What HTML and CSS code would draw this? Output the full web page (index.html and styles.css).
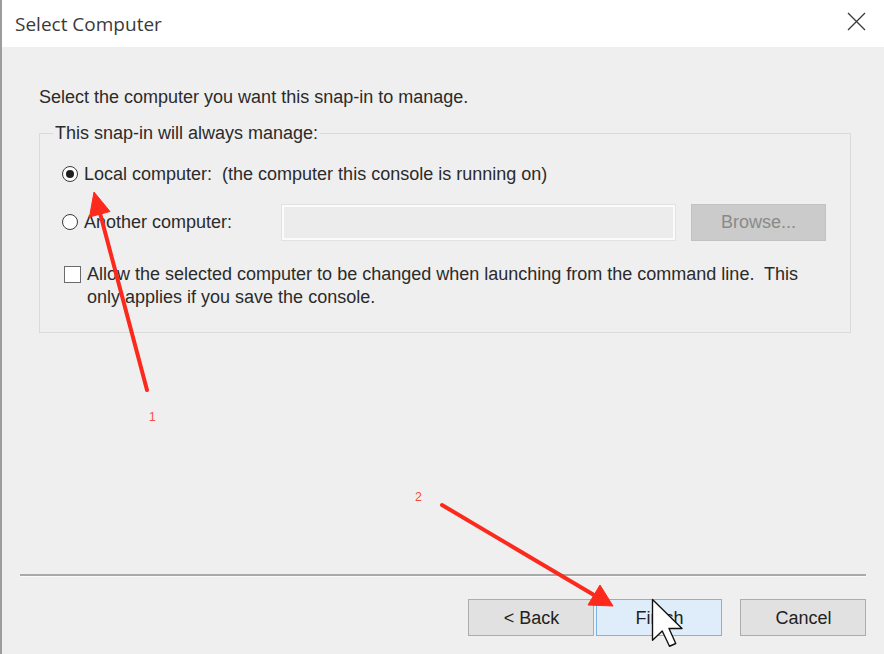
FILE: index.html
```html
<!DOCTYPE html>
<html>
<head>
<meta charset="utf-8">
<title>Select Computer</title>
<link rel="stylesheet" href="styles.css">
</head>
<body>
<div class="window">
  <div class="titlebar">
    <span class="title">Select Computer</span>
    <svg class="close" width="19" height="19" viewBox="0 0 19 19"><path d="M1 1 L18 18 M18 1 L1 18" stroke="#3a3a3a" stroke-width="1.3" fill="none"/></svg>
  </div>
  <div class="content">
    <p class="prompt">Select the computer you want this snap-in to manage.</p>
    <fieldset class="group">
      <legend>This snap-in will always manage:</legend>
      <div class="row row-local">
        <span class="radio checked"></span>
        <span class="label">Local computer:&nbsp; (the computer this console is running on)</span>
      </div>
      <div class="row row-other">
        <span class="radio"></span>
        <span class="label label-fixed">Another computer:</span>
        <span class="textbox"></span>
        <span class="btn-browse">Browse...</span>
      </div>
      <div class="row row-check">
        <span class="checkbox"></span>
        <span class="check-text">Allow the selected computer to be changed when launching from the command line.&nbsp; This<br>only applies if you save the console.</span>
      </div>
    </fieldset>
  </div>
  <div class="footer">
    <div class="separator"></div>
    <div class="buttons">
      <button class="btn">&lt; Back</button>
      <button class="btn btn-default">Finish</button>
      <button class="btn btn-cancel">Cancel</button>
    </div>
  </div>
  <svg class="annotations" width="884" height="654" viewBox="0 0 884 654">
    <g fill="#fc2a1c" stroke="#fc2a1c">
      <line x1="147" y1="390" x2="99.7" y2="212" stroke-width="4" stroke-linecap="round"/>
      <polygon points="94,192 110,211.5 89.5,217" stroke-width="1" stroke-linejoin="round"/>
      <line x1="442" y1="505" x2="594" y2="595" stroke-width="4" stroke-linecap="round"/>
      <polygon points="613,606 588,605 600,585" stroke-width="1" stroke-linejoin="round"/>
    </g>
    <text class="anno-label" x="149" y="421" font-size="12">1</text>
    <text class="anno-label" x="415" y="501" font-size="12.5">2</text>
    <path d="M0 0 V16.3 L3.9 12.6 L6.8 18.7 L9.3 17.6 L6.6 11.6 H11.8 Z" transform="translate(652.5 599.5) scale(2.5)" fill="#fff" stroke="#111" stroke-width="0.55" stroke-linejoin="round"/>
  </svg>
</div>
</body>
</html>
```

FILE: styles.css
```css
* {
  box-sizing: border-box;
}

html,
body {
  margin: 0;
  padding: 0;
}

body {
  width: 884px;
  height: 654px;
  overflow: hidden;
  background: #efefef;
  font-family: "Liberation Sans", Arial, sans-serif;
  color: #2b2b2b;
}

.window {
  position: relative;
  width: 884px;
  height: 654px;
  display: flex;
  flex-direction: column;
  background: #efefef;
  border-left: 2px solid #9c9c9c;
}

.titlebar {
  flex: none;
  height: 47px;
  background: #ffffff;
  display: flex;
  justify-content: space-between;
  align-items: center;
  padding: 0 18px 0 13px;
}

.title {
  font-family: "Open Sans", "Noto Sans", sans-serif;
  font-size: 19px;
  color: #3a3a3a;
}

.close {
  align-self: flex-start;
  margin-top: 12px;
}

.content {
  flex: 1;
  padding: 0 33px 0 37px;
  font-size: 18px;
}

.prompt {
  margin: 39px 0 0;
  line-height: 22px;
}

.group {
  margin: 14px 0 0;
  padding: 0 24px 23px 22px;
  border: 1px solid #dadada;
  min-width: 0;
}

.group legend {
  padding: 0 2px;
  margin-left: -9px;
  line-height: 22px;
}

.row {
  display: flex;
  align-items: center;
}

.row-local {
  height: 30px;
  margin-top: 15px;
}

.row-other {
  height: 38px;
  margin-top: 14px;
}

.row-check {
  margin-top: 22px;
  align-items: flex-start;
  line-height: 23px;
}

.radio {
  flex: none;
  width: 16px;
  height: 16px;
  border: 1px solid #3a3a3a;
  border-radius: 50%;
  background: #ffffff;
  margin-right: 6px;
  display: flex;
  align-items: center;
  justify-content: center;
}

.radio.checked::after {
  content: "";
  width: 8px;
  height: 8px;
  border-radius: 50%;
  background: #1f1f1f;
}

.label-fixed {
  flex: none;
  width: 198px;
}

.textbox {
  flex: none;
  width: 393px;
  height: 35px;
  border: 2px solid #fbfbfb;
  background: #ececec;
  box-shadow: 0 0 0 1px #e2e2e2;
}

.btn-browse {
  flex: none;
  width: 135px;
  height: 37px;
  margin-left: 16px;
  background: #cbcbcb;
  border: 1px solid #c2c2c2;
  color: #8a8a8a;
  display: flex;
  align-items: center;
  justify-content: center;
}

.checkbox {
  flex: none;
  width: 17px;
  height: 17px;
  border: 1px solid #6b6b6b;
  background: #ffffff;
  margin: 3px 6px 0 2px;
}

.footer {
  flex: none;
  padding: 0 18px 18px 18px;
}

.separator {
  height: 3px;
  border-top: 2px solid #a9a9a9;
  border-bottom: 1px solid #fafafa;
}

.buttons {
  display: flex;
  justify-content: flex-end;
  margin-top: 22px;
}

.btn {
  width: 126px;
  height: 37px;
  padding: 0 0 0 1px;
  background: #e1e1e1;
  border: 1px solid #adadad;
  font-family: "Liberation Sans", Arial, sans-serif;
  font-size: 18px;
  line-height: 36px;
  color: #222222;
}

.btn-default {
  margin-left: 2px;
  background: #dfedfa;
  border-color: #7db3e6;
}

.btn-cancel {
  margin-left: 18px;
}

.annotations {
  position: absolute;
  left: -2px;
  top: 0;
  pointer-events: none;
}

.anno-label {
  fill: #fb4a3a;
  font-family: "Liberation Sans", Arial, sans-serif;
}
```
